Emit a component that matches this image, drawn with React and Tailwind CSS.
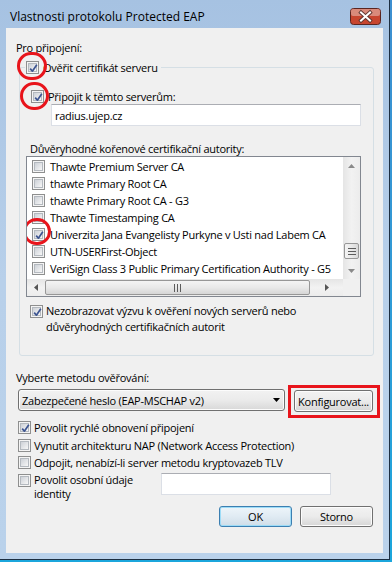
import React from 'react';

const Check = ({ checked }) => (
  <span className="relative inline-flex shrink-0 w-[13px] h-[13px] border border-[#8e8f8f] bg-[#f4f4f4] p-[1px]">
    <span className="block w-full h-full border border-[#b4b9bf] bg-linear-to-br from-[#cdd1d7] to-[#f7f7f7]" />
    {checked && (
      <svg className="absolute left-0 top-0" width="13" height="13" viewBox="0 0 13 13">
        <path d="M3.2 6.6 L5.4 9.2 L9.8 2.8" fill="none" stroke="#3d5591" strokeWidth="1.7" strokeLinejoin="round" />
      </svg>
    )}
  </span>
);

const Ring = ({ className }) => (
  <span className={`absolute rounded-full border-[3px] border-[#e8141b] pointer-events-none ${className}`} />
);

const TriDown = ({ color = '#000' }) => (
  <svg width="7" height="4" viewBox="0 0 7 4"><path d="M0 0 H7 L3.5 4 Z" fill={color} /></svg>
);

// Aero close button
const CloseBtn = () => (
  <svg className="ml-auto mr-[8px] mt-[8px] shrink-0" width="31" height="17" viewBox="0 0 31 17">
    <rect x="0.5" y="0.5" width="30" height="16" rx="3" fill="#c7452f" stroke="#5b2520" />
    <rect x="1" y="1" width="29" height="7" rx="2" fill="#d98a7b" />
    <path d="M11 4.5 L20 12.5 M20 4.5 L11 12.5" stroke="#5e3631" strokeWidth="3.8" strokeLinecap="square" />
    <path d="M11 4.5 L20 12.5 M20 4.5 L11 12.5" stroke="#ffffff" strokeWidth="2" strokeLinecap="square" />
  </svg>
);

const Grip = ({ vertical }) => (
  <svg width={vertical ? 8 : 7} height={vertical ? 7 : 8} viewBox={vertical ? '0 0 8 7' : '0 0 7 8'}>
    {vertical ? (
      <g fill="#5c5c5c">
        <rect x="0" y="0" width="8" height="1" />
        <rect x="0" y="3" width="8" height="1" />
        <rect x="0" y="6" width="8" height="1" />
      </g>
    ) : (
      <g fill="#5c5c5c">
        <rect x="0" y="0" width="1" height="8" />
        <rect x="3" y="0" width="1" height="8" />
        <rect x="6" y="0" width="1" height="8" />
      </g>
    )}
  </svg>
);

const certs = [
  { name: 'Thawte Premium Server CA' },
  { name: 'thawte Primary Root CA' },
  { name: 'thawte Primary Root CA - G3' },
  { name: 'Thawte Timestamping CA' },
  { name: 'Univerzita Jana Evangelisty Purkyne v Usti nad Labem CA', checked: true, ring: true },
  { name: 'UTN-USERFirst-Object' },
  { name: 'VeriSign Class 3 Public Primary Certification Authority - G5' },
];

const Button = ({ children, isDefault, className = '' }) => (
  <div
    className={`h-[21px] rounded-[3px] border flex items-center justify-center ${
      isDefault
        ? 'border-[#3c7fb1] shadow-[inset_0_0_0_1px_#9ddcf7] bg-linear-to-b from-[#eef5fa] via-[#e0ebf3] to-[#cfdde8]'
        : 'border-[#707070] shadow-[inset_0_0_0_1px_#fcfcfc] bg-linear-to-b from-[#f2f2f2] via-[#ebebeb] to-[#d6d6d6]'
    } ${className}`}
  >
    {children}
  </div>
);

export default function App() {
  return (
    <div className="w-[392px] h-[562px] overflow-hidden bg-linear-to-b from-[#3d8fd0] to-[#1ba6dc] font-['Open_Sans',sans-serif] text-[11px] leading-[15px] tracking-[-0.25px] text-black">
      <div className="w-[390px] h-[560px] border-r border-b border-[#1d2f42] bg-linear-to-b from-[#a6c2e2] via-[#b8d0ea] to-[#bad2eb] flex flex-col">
        {/* title bar */}
        <div className="h-[28px] shrink-0 flex items-start">
          <span className="ml-[10px] mt-[9px] text-[12px] leading-[15px] tracking-normal">Vlastnosti protokolu Protected EAP</span>
          <CloseBtn />
        </div>

        {/* client area */}
        <div className="ml-[6px] mr-[6px] h-[525px] bg-[#f0f0f0] flex flex-col pl-[10px]">
          <div className="mt-[12px] h-[15px]">Pro připojení:</div>

          {/* group box */}
          <div className="mt-[12px] ml-[3px] w-[355px] h-[289px] border border-[#d5dfe5] rounded-[3px] flex flex-col">
            <div className="-mt-[8px] ml-[5px] self-start h-[15px] bg-[#f0f0f0] pl-[1px] pr-[3px] flex items-center gap-[4px]">
              <span className="relative flex">
                <Check checked />
                <Ring className="w-[30px] h-[28px] -left-[9px] -top-[9px]" />
              </span>
              <span>Ověřit certifikát serveru</span>
            </div>

            <div className="mt-[14px] ml-[11px] h-[15px] flex items-center gap-[4px]">
              <span className="relative flex">
                <Check checked />
                <Ring className="w-[29px] h-[28px] -left-[11px] -top-[8px]" />
              </span>
              <span>Připojit k těmto serverům:</span>
            </div>

            <div className="ml-[31px] w-[310px] h-[22px] bg-white border border-[#dbdfe6] border-t-[#abadb3] flex items-center pl-[3px]">
              radius.ujep.cz
            </div>

            <div className="mt-[15px] ml-[10px] h-[15px]">Důvěryhodné kořenové certifikační autority:</div>

            {/* list box */}
            <div className="ml-[6px] w-[335px] h-[141px] border border-[#828790] bg-white flex flex-col">
              <div className="h-[122px] flex">
                <div className="w-[316px] pt-[1px] flex flex-col overflow-hidden">
                  {certs.map((c) => (
                    <div key={c.name} className="h-[17px] shrink-0 flex items-center pl-[5px] gap-[5px] whitespace-nowrap">
                      <span className="relative flex">
                        <Check checked={c.checked} />
                        {c.ring && <Ring className="w-[28px] h-[27px] -left-[9px] -top-[10px]" />}
                      </span>
                      <span>{c.name}</span>
                    </div>
                  ))}
                </div>
                {/* vertical scrollbar */}
                <div className="w-[17px] flex flex-col bg-linear-to-r from-[#e5e5e5] via-[#f2f2f2] to-[#ececec]">
                  <div className="h-[17px] flex items-center justify-center">
                    <svg width="7" height="4" viewBox="0 0 7 4"><path d="M0 4 H7 L3.5 0 Z" fill="#8a8a8a" /></svg>
                  </div>
                  <div className="flex-1 flex flex-col">
                    <div className="mt-[69px] mx-[1px] h-[16px] rounded-[2px] border border-[#979797] bg-linear-to-r from-[#f4f4f4] via-[#e9e9e9] to-[#d9d9d9] flex items-center justify-center">
                      <Grip vertical />
                    </div>
                  </div>
                  <div className="h-[17px] flex items-center justify-center">
                    <TriDown color="#8a8a8a" />
                  </div>
                </div>
              </div>
              {/* horizontal scrollbar */}
              <div className="h-[17px] flex">
                <div className="w-[316px] flex items-center bg-linear-to-b from-[#e5e5e5] via-[#f2f2f2] to-[#ececec]">
                  <div className="w-[17px] h-full flex items-center justify-center">
                    <svg width="4" height="7" viewBox="0 0 4 7"><path d="M4 0 V7 L0 3.5 Z" fill="#555" /></svg>
                  </div>
                  <div className="ml-[1px] w-[265px] h-[15px] rounded-[2px] border border-[#979797] bg-linear-to-b from-[#f4f4f4] via-[#e9e9e9] to-[#d6d6d6] flex items-center justify-center">
                    <Grip />
                  </div>
                  <div className="flex-1 h-full flex items-center justify-center">
                    <svg width="4" height="7" viewBox="0 0 4 7"><path d="M0 0 V7 L4 3.5 Z" fill="#555" /></svg>
                  </div>
                </div>
                <div className="w-[17px] bg-[#f0f0f0]" />
              </div>
            </div>

            <div className="mt-[6px] ml-[10px] flex items-start gap-[3px] leading-[16px]">
              <span className="mt-[2px] flex"><Check checked /></span>
              <span>
                Nezobrazovat výzvu k ověření nových serverů nebo
                <br />
                důvěryhodných certifikačních autorit
              </span>
            </div>
          </div>

          <div className="mt-[14px] h-[15px]">Vyberte metodu ověřování:</div>

          <div className="mt-[4px] flex items-start">
            <div className="ml-[2px] w-[267px] h-[22px] rounded-[3px] border border-[#707070] shadow-[inset_0_0_0_1px_#fcfcfc] bg-linear-to-b from-[#f2f2f2] via-[#ebebeb] to-[#d8d8d8] flex items-center pl-[3px] pr-[4px]">
              <span className="flex-1">Zabezpečené heslo (EAP-MSCHAP v2)</span>
              <TriDown />
            </div>
            <div className="relative ml-[9px] mt-[1px]">
              <Button className="w-[79px] h-[22px]">Konfigurovat...</Button>
              <span className="absolute -left-[6px] -right-[7px] -top-[5px] -bottom-[6px] border-[3px] border-[#e8141b] pointer-events-none" />
            </div>
          </div>

          <div className="mt-[8px] ml-[2px] h-[15px] flex items-center gap-[3px]">
            <Check checked />
            <span>Povolit rychlé obnovení připojení</span>
          </div>
          <div className="mt-[3px] ml-[2px] h-[15px] flex items-center gap-[3px]">
            <Check />
            <span>Vynutit architekturu NAP (Network Access Protection)</span>
          </div>
          <div className="mt-[2px] ml-[2px] h-[15px] flex items-center gap-[3px]">
            <Check />
            <span>Odpojit, nenabízí-li server metodu kryptovazeb TLV</span>
          </div>
          <div className="mt-[3px] ml-[2px] flex items-start">
            <span className="mt-[1px] flex"><Check /></span>
            <span className="ml-[3px] w-[124px] leading-[14px]">
              Povolit osobní údaje
              <br />
              identity
            </span>
            <div className="ml-[3px] w-[170px] h-[22px] bg-white border border-[#dbdfe6] border-t-[#abadb3]" />
          </div>

          <div className="mt-[5px] mr-[10px] self-end flex gap-[8px]">
            <Button isDefault className="w-[73px] h-[20px]">OK</Button>
            <Button className="w-[73px] h-[20px]">Storno</Button>
          </div>
        </div>
      </div>
    </div>
  );
}
